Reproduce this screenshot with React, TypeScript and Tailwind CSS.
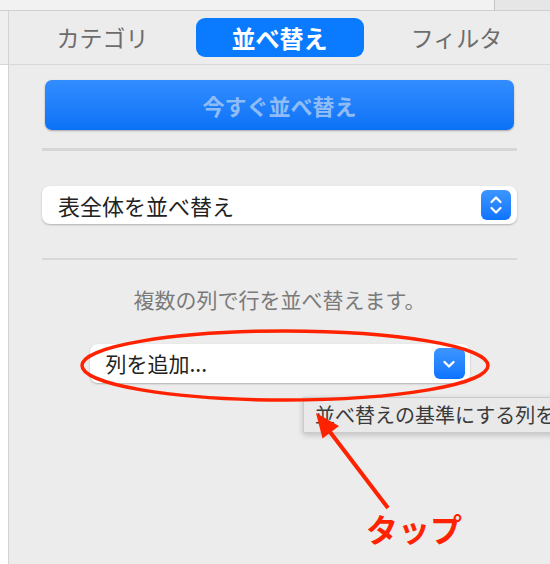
import React from 'react';

const jp = { fontFamily: '"Noto Sans CJK JP", "Noto Sans", sans-serif' };

function Stepper() {
    return (
        <div className="w-[30px] h-[30px] rounded-[6px] bg-gradient-to-b from-[#3d95ff] to-[#0a74ff] flex items-center justify-center">
            <svg width="14" height="20" viewBox="0 0 14 20" fill="none" stroke="white" strokeWidth="2.2" strokeLinecap="round" strokeLinejoin="round">
                <path d="M2.5 7 L7 2.5 L11.5 7" />
                <path d="M2.5 13 L7 17.5 L11.5 13" />
            </svg>
        </div>
    );
}

function Chevron() {
    return (
        <div className="w-[31px] h-[31px] rounded-[6px] bg-gradient-to-b from-[#3d95ff] to-[#0a74ff] flex items-center justify-center">
            <svg width="14" height="10" viewBox="0 0 14 10" fill="none" stroke="white" strokeWidth="2.4" strokeLinecap="round" strokeLinejoin="round">
                <path d="M2.5 3 L7 7.5 L11.5 3" />
            </svg>
        </div>
    );
}

export default function App() {
    return (
        <div className="relative w-[550px] h-[564px] overflow-hidden bg-[#ececec]" style={jp}>
            {/* window strip */}
            <div className="flex h-[11px] border-b border-[#cfcfcf]">
                <div className="w-[495px] bg-[#f2f2f2] border-r border-[#c4c4c4]" />
                <div className="flex-1 bg-[#e6e6e6]" />
            </div>

            <div className="flex h-[553px]">
                {/* left sliver */}
                <div className="w-[8px] flex flex-col">
                    <div className="h-[54px] bg-[#efefef] border-b border-[#d8d8d8]" />
                    <div className="flex-1 bg-white" />
                </div>

                {/* inspector panel */}
                <div className="flex-1 border-l border-[#d3d3d3] bg-[#ececec]">
                    {/* tabs */}
                    <div className="h-[54px] border-b border-[#d8d8d8] flex items-center justify-center gap-[9px]">
                        <div className="w-[168px] h-[39px] flex items-center justify-center text-[23px] text-[#6c6c6c]">
                            カテゴリ
                        </div>
                        <div className="w-[168px] h-[39px] rounded-[9px] bg-[#0a7bff] flex items-center justify-center text-[24px] font-bold text-white">
                            並べ替え
                        </div>
                        <div className="w-[168px] h-[39px] flex items-center justify-center text-[23px] text-[#6c6c6c]">
                            フィルタ
                        </div>
                    </div>

                    <div className="px-[33px] flex flex-col">
                        <button className="mt-[15px] mx-[3px] h-[50px] rounded-[7px] bg-gradient-to-b from-[#318dff] to-[#0a72f6] shadow-[0_1px_2px_rgba(0,0,0,0.3)] text-[22px] font-bold text-[#8fbcf5]">
                            今すぐ並べ替え
                        </button>

                        <div className="mt-[18px] h-[3px] bg-[#d6d6d6]" />

                        <div className="mt-[35px] h-[38px] rounded-[8px] bg-white shadow-[0_1px_2px_rgba(0,0,0,0.25)] flex items-center justify-between pl-[16px] pr-[6px]">
                            <span className="text-[22px] text-[#222]">表全体を並べ替え</span>
                            <Stepper />
                        </div>

                        <div className="mt-[34px] h-[2px] bg-[#d8d8d8]" />

                        <p className="mt-[24px] h-[31px] leading-[31px] text-center text-[21px] text-[#7a7a7a]">
                            複数の列で行を並べ替えます。
                        </p>

                        <div className="mt-[29px] mx-auto w-[380px] h-[39px] rounded-[8px] bg-white shadow-[0_1px_2px_rgba(0,0,0,0.25)] flex items-center justify-between pl-[16px] pr-[5px]">
                            <span className="text-[21px] text-[#222]">列を追加...</span>
                            <Chevron />
                        </div>
                    </div>
                </div>
            </div>

            {/* tooltip */}
            <div className="absolute left-[303px] top-[397px] w-[280px] h-[36px] bg-[#e9e9e9] border border-[#cbcbcb] shadow-[0_2px_6px_rgba(0,0,0,0.2)] flex items-center pl-[11px] text-[20px] text-[#3a3a3a] whitespace-nowrap">
                並べ替えの基準にする列を
            </div>

            {/* annotation: ellipse */}
            <svg className="absolute left-[78px] top-[327px]" width="414" height="78" viewBox="0 0 414 78">
                <ellipse cx="207" cy="38.5" rx="203" ry="34.5" fill="none" stroke="#ff2200" strokeWidth="3.5" />
            </svg>

            {/* annotation: arrow */}
            <svg className="absolute left-0 top-0" width="550" height="564" viewBox="0 0 550 564">
                <line x1="388" y1="508" x2="327" y2="428" stroke="#ff2200" strokeWidth="4" />
                <polygon points="316,413 339,426 322.5,438.5" fill="#ff2200" />
            </svg>

            <div className="absolute left-[366px] top-[506px] text-[32px] leading-[44px] font-bold text-[#ff2200]">
                タップ
            </div>
        </div>
    );
}
